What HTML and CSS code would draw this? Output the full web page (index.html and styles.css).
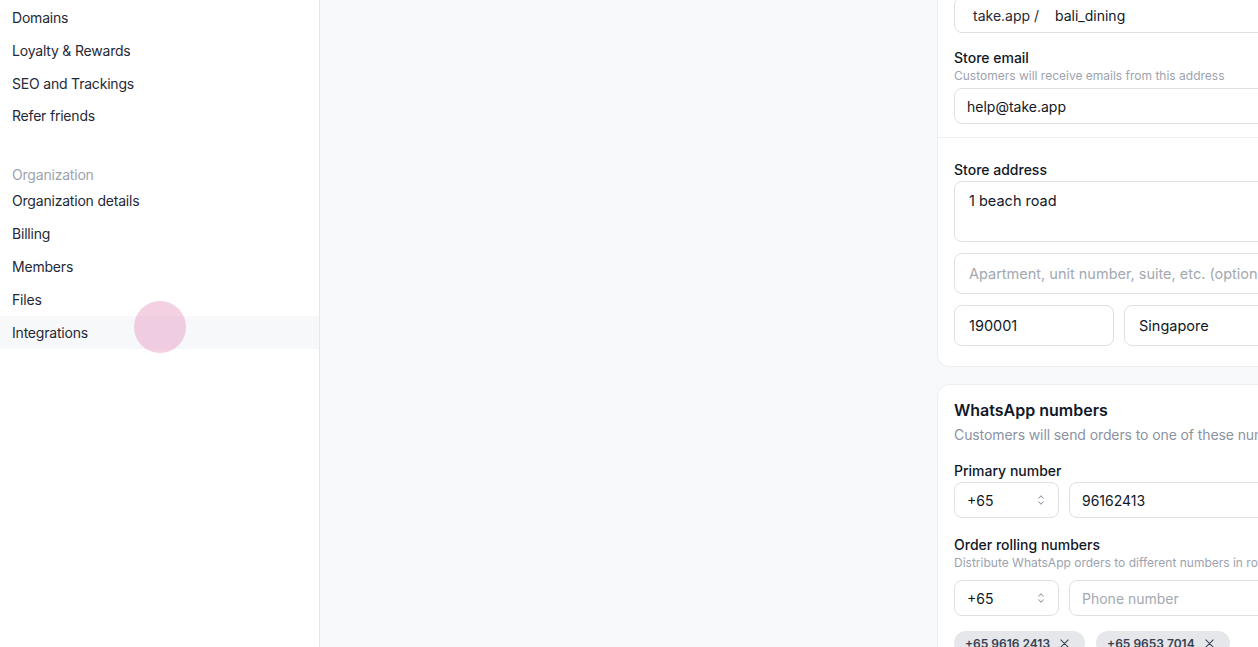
FILE: index.html
```html
<!DOCTYPE html>
<html lang="en">
<head>
<meta charset="utf-8">
<title>Settings</title>
<link rel="stylesheet" href="styles.css">
</head>
<body>
<div class="app">
  <aside class="sidebar">
    <nav class="nav nav-top">
      <a class="nav-item">Domains</a>
      <a class="nav-item">Loyalty &amp; Rewards</a>
      <a class="nav-item">SEO and Trackings</a>
      <a class="nav-item">Refer friends</a>
    </nav>
    <div class="nav-heading">Organization</div>
    <nav class="nav">
      <a class="nav-item">Organization details</a>
      <a class="nav-item">Billing</a>
      <a class="nav-item">Members</a>
      <a class="nav-item">Files</a>
      <a class="nav-item is-hover">Integrations<span class="click-dot"></span></a>
    </nav>
  </aside>
  <main class="main">
    <div class="column">
      <section class="card">
        <div class="card-section first">
          <div class="input prefixed"><span class="prefix">take.app /</span><span>bali_dining</span></div>
          <div class="field">
            <div class="label">Store email</div>
            <div class="help">Customers will receive emails from this address</div>
            <div class="input">help@take.app</div>
          </div>
        </div>
        <div class="card-section second">
          <div class="label">Store address</div>
          <div class="address">
            <div class="input textarea">1 beach road</div>
            <div class="input tall placeholder">Apartment, unit number, suite, etc. (optional)</div>
            <div class="row">
              <div class="input tall zip">190001</div>
              <div class="input tall grow">Singapore</div>
            </div>
          </div>
        </div>
      </section>
      <section class="card card-wa">
        <h2 class="card-title">WhatsApp numbers</h2>
        <p class="card-sub">Customers will send orders to one of these numbers</p>
        <div class="field wa-field">
          <div class="label label-primary">Primary number</div>
          <div class="row">
            <div class="input select">+65
              <svg class="chev" viewBox="0 0 24 24" width="14" height="14"><path d="M8 9l4-4 4 4M16 15l-4 4-4-4" fill="none" stroke="#9ca3af" stroke-width="1.8" stroke-linecap="round" stroke-linejoin="round"/></svg>
            </div>
            <div class="input grow phone">96162413</div>
          </div>
        </div>
        <div class="field wa-field rolling-field">
          <div class="label">Order rolling numbers</div>
          <div class="help">Distribute WhatsApp orders to different numbers in rotation</div>
          <div class="row">
            <div class="input select">+65
              <svg class="chev" viewBox="0 0 24 24" width="14" height="14"><path d="M8 9l4-4 4 4M16 15l-4 4-4-4" fill="none" stroke="#9ca3af" stroke-width="1.8" stroke-linecap="round" stroke-linejoin="round"/></svg>
            </div>
            <div class="input grow phone placeholder">Phone number</div>
          </div>
          <div class="chips">
            <span class="chip">+65 9616 2413
              <svg viewBox="0 0 12 12" width="11" height="11"><path d="M2 2l8 8M10 2l-8 8" stroke="#374151" stroke-width="1.1" stroke-linecap="round"/></svg>
            </span>
            <span class="chip">+65 9653 7014
              <svg viewBox="0 0 12 12" width="11" height="11"><path d="M2 2l8 8M10 2l-8 8" stroke="#374151" stroke-width="1.1" stroke-linecap="round"/></svg>
            </span>
          </div>
        </div>
      </section>
    </div>
  </main>
</div>
</body>
</html>
```

FILE: styles.css
```css
* { box-sizing: border-box; }
html, body { margin: 0; height: 100%; }
body {
  font-family: Inter, "Noto Sans", "Liberation Sans", sans-serif;
  font-size: 14px;
  color: #111827;
  overflow: hidden;
  background: #f8f9fb;
}
.app { display: flex; height: 100vh; }
.sidebar {
  width: 320px;
  flex-shrink: 0;
  background: #fff;
  border-right: 1px solid #e5e7eb;
  padding-top: 1.5px;
  letter-spacing: -0.2px;
}
.nav { display: flex; flex-direction: column; }
.nav-item {
  position: relative;
  display: flex;
  align-items: center;
  height: 33px;
  padding: 1px 12px 0;
  color: #1f2937;
  font-size: 14px;
  line-height: 20px;
}
.nav-top .nav-item { height: 32.7px; }
.nav-item.is-hover { background: #f7f8fa; }
.nav-heading {
  margin-top: 31.5px;
  padding: 1px 12px 0;
  height: 20px;
  line-height: 20px;
  color: #9ca3af;
  font-size: 14px;
}
.click-dot {
  position: absolute;
  left: 134px;
  top: -15px;
  width: 52px;
  height: 52px;
  border-radius: 50%;
  background: rgba(228, 150, 190, 0.45);
}
.main { flex: 1; overflow: hidden; }
.column {
  margin-left: 617px;
  width: 480px;
  display: flex;
  flex-direction: column;
  gap: 17px;
  margin-top: -20px;
}
.card {
  background: #fff;
  border: 1px solid #eceef1;
  border-radius: 12px;
}
.card-section { padding: 22px 16px 20px; }
.card-section.first {
  padding-top: 16px;
  padding-bottom: 13px;
  border-bottom: 1px solid #eceef1;
}
.field { display: flex; flex-direction: column; }
.card-section.first .field { margin-top: 15px; }
.label {
  font-size: 14px;
  line-height: 20px;
  font-weight: 500;
  color: #111827;
}
.help {
  font-size: 12px;
  line-height: 16px;
  color: #9ca3af;
  margin-bottom: 4px;
}
.input {
  display: flex;
  align-items: center;
  height: 36px;
  border: 1px solid #dde0e5;
  border-radius: 8px;
  padding: 0 12px;
  font-size: 14px;
  color: #111827;
  background: #fff;
  white-space: nowrap;
  overflow: hidden;
}
.input.prefixed { padding-left: 18px; }
.prefix { width: 82px; color: #1f2937; }
.address { display: flex; flex-direction: column; gap: 11px; margin-top: 1px; }
.address .input { font-size: 14.5px; }
.input.textarea { height: 61px; align-items: flex-start; padding: 10px 14px; }
.input.tall { height: 41px; padding: 0 14px; }
.placeholder { color: #a3a8b1; }
.row { display: flex; gap: 10px; }
.zip { width: 160px; flex-shrink: 0; }
.grow { flex: 1; }
.card-wa { padding: 13px 16px 40px; }
.card-title {
  margin: 0;
  font-size: 16px;
  line-height: 24px;
  font-weight: 600;
  color: #111827;
}
.card-sub {
  margin: 3px 0 0;
  font-size: 14px;
  line-height: 20px;
  color: #8b93a1;
  letter-spacing: -0.1px;
  white-space: nowrap;
}
.wa-field { margin-top: 16px; }
.label-primary { margin-bottom: 1px; }
.rolling-field { margin-top: 17px; }
.rolling-field .help { margin-bottom: 9px; white-space: nowrap; }
.select {
  width: 105px;
  flex-shrink: 0;
  justify-content: space-between;
  padding-right: 10px;
}
.chev { flex-shrink: 0; }
.phone { padding-left: 12px; }
.chips { display: flex; gap: 11px; margin-top: 15px; }
.chip {
  display: inline-flex;
  align-items: center;
  gap: 9px;
  height: 24px;
  padding: 0 15px 0 11px;
  border-radius: 999px;
  background: #e5e7eb;
  font-size: 12px;
  font-weight: 600;
  color: #374151;
}
```
